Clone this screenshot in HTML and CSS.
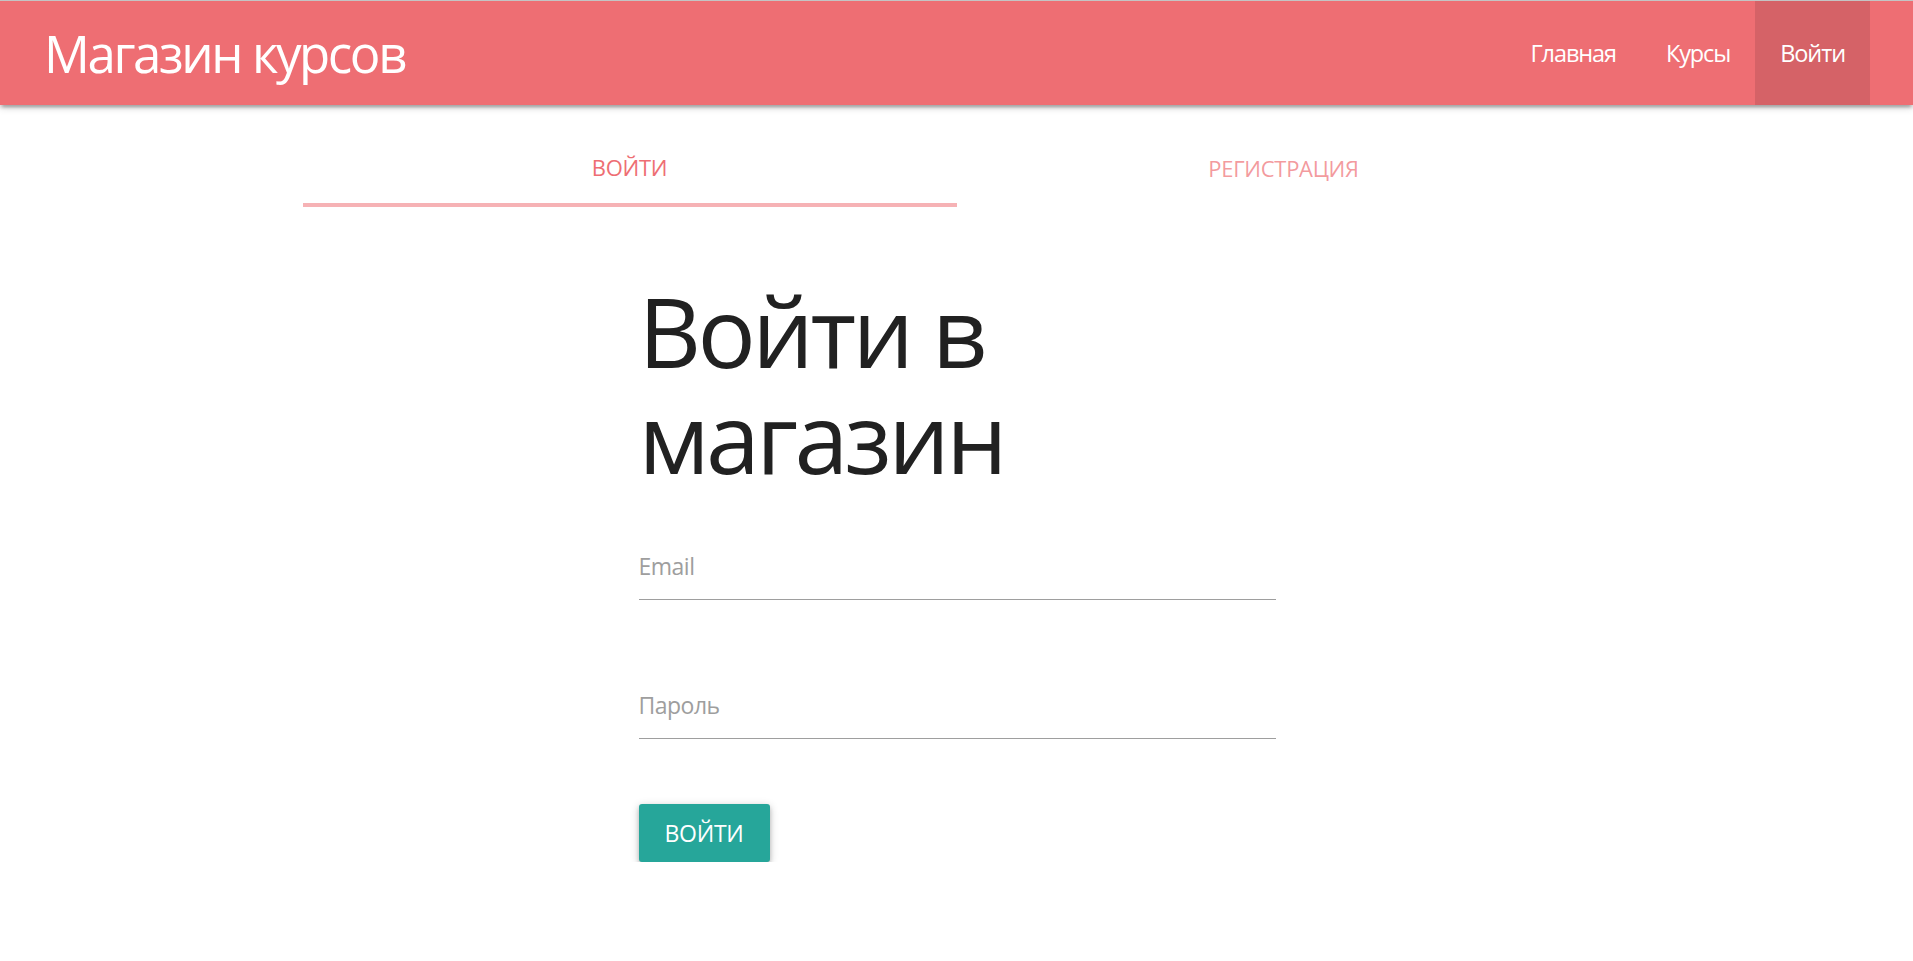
FILE: index.html
```html
<!DOCTYPE html>
<html lang="ru">
<head>
<meta charset="utf-8">
<title>Магазин курсов</title>
<link rel="stylesheet" href="styles.css">
</head>
<body>
<nav class="navbar">
  <a class="brand" href="#">Магазин курсов</a>
  <ul class="nav-links">
    <li><a href="#">Главная</a></li>
    <li><a href="#">Курсы</a></li>
    <li class="active"><a href="#">Войти</a></li>
  </ul>
</nav>
<main class="page">
  <ul class="tabs">
    <li class="tab active"><a href="#">Войти</a></li>
    <li class="tab"><a href="#">Регистрация</a></li>
  </ul>
  <section class="form-col">
    <h1 class="title">Войти в магазин</h1>
    <div class="field email-field"><label>Email</label></div>
    <div class="field pass-field"><label>Пароль</label></div>
    <button class="btn">Войти</button>
  </section>
</main>
</body>
</html>
```

FILE: styles.css
```css
* { box-sizing: border-box; }
html, body { margin: 0; padding: 0; }
body {
  font-family: "Open Sans", "Noto Sans", "DejaVu Sans", sans-serif;
  background: #fff;
  color: #212121;
}
a { text-decoration: none; color: inherit; }
ul { list-style: none; margin: 0; padding: 0; }

.navbar {
  height: 105px;
  border-top: 1px solid #c4c4c4;
  background: #ee6e73;
  display: flex;
  align-items: stretch;
  justify-content: space-between;
  padding: 0 43px 0 44px;
  box-shadow: 0 3px 3px 0 rgba(0,0,0,.14), 0 5px 2px -3px rgba(0,0,0,.12), 0 2px 8px 0 rgba(0,0,0,.2);
  position: relative;
  z-index: 2;
}
.brand {
  color: #fff;
  font-size: 51px;
  line-height: 104px;
  letter-spacing: -2.4px;
}
.nav-links { display: flex; }
.nav-links li a {
  display: block;
  height: 104px;
  line-height: 104px;
  padding: 0 25px;
  color: #fff;
  font-size: 23.5px;
  letter-spacing: -1.1px;
}
.nav-links li.active a { background: rgba(0,0,0,0.1); }

.page {
  display: flex;
  flex-direction: column;
  align-items: center;
}
.tabs {
  display: flex;
  width: 1308px;
  margin-top: 25px;
  height: 77px;
}
.tab {
  flex: 1;
  text-align: center;
}
.tab a {
  display: block;
  height: 77px;
  line-height: 77px;
  font-size: 22px;
  text-transform: uppercase;
  color: rgba(238,110,115,0.7);
  letter-spacing: -0.3px;
}
.tab.active a {
  color: #ee6e73;
  border-bottom: 4px solid #f6b2b5;
  line-height: 75px;
}

.form-col {
  width: 637px;
  margin-left: 1px;
}
.title {
  margin: 70px 0 0 0;
  font-weight: 400;
  font-size: 97px;
  line-height: 106px;
  letter-spacing: -3.6px;
  color: #212121;
  width: 440px;
}
.field {
  border-bottom: 1px solid #9e9e9e;
  padding-bottom: 18px;
}
.field label {
  display: block;
  font-size: 23px;
  line-height: 30px;
  color: #9e9e9e;
  letter-spacing: -0.5px;
}
.email-field { margin-top: 62px; }
.pass-field { margin-top: 90px; }

.btn {
  margin-top: 65px;
  height: 58px;
  width: 131px;
  border: none;
  border-radius: 3px;
  background: #26a69a;
  color: #fff;
  font-family: inherit;
  font-size: 23px;
  text-transform: uppercase;
  letter-spacing: -0.3px;
  padding: 0;
  box-shadow: 0 3px 4px 0 rgba(0,0,0,.16), 0 5px 2px -3px rgba(0,0,0,.14), 0 2px 9px 0 rgba(0,0,0,.22);
}
```
